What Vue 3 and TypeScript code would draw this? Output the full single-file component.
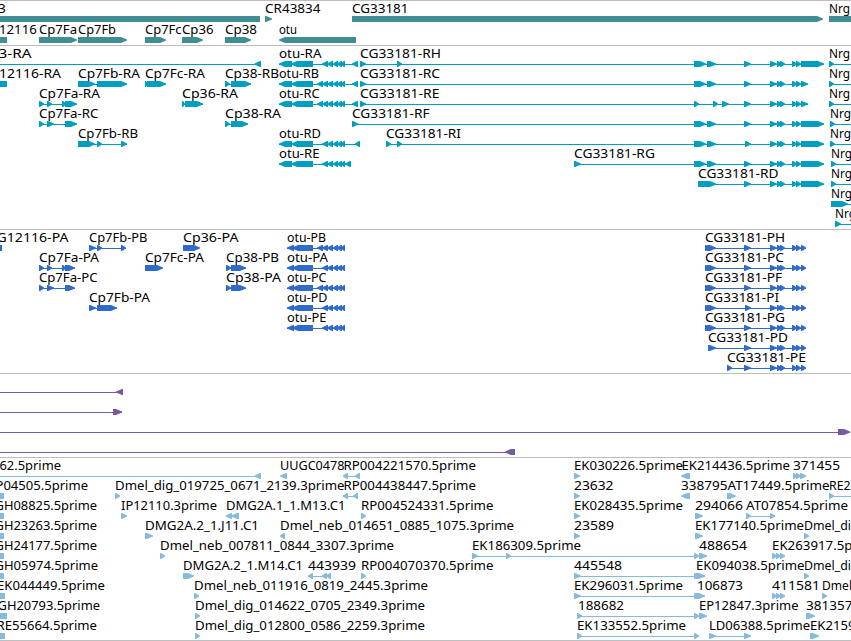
<template>
  <main class="browser">
    <section v-for="track in tracks" :key="track.name" :class="['track', track.name]">
      <svg v-for="(row, i) in track.rows" :key="i" class="row" width="851" height="20">
        <g v-for="(item, j) in row" :key="j">
          <text
            v-if="item.label"
            class="label"
            :x="item.from - 0.5"
            y="11"
            :textLength="item.to ? item.to - item.from + 1 : undefined"
            lengthAdjust="spacingAndGlyphs"
          >{{ item.label }}</text>
          <rect
            v-if="item.exons.length > 1"
            class="shape"
            :x="item.exons[0][0]"
            y="17"
            :width="item.exons[item.exons.length - 1][1] - item.exons[0][0]"
            height="1"
          />
          <polygon
            v-for="(exon, k) in item.exons"
            :key="k"
            class="shape"
            :points="arrow(exon, item.reverse)"
          />
        </g>
      </svg>
    </section>
  </main>
</template>

<script setup lang="ts">
type Exon = [number, number];

interface Feature {
  label: string;
  from: number;
  to: number;
  exons: Exon[];
  reverse: boolean;
}

interface Track {
  name: string;
  rows: Feature[][];
}

const fwd = (label: string, from: number, to: number, exons: Exon[]): Feature => ({
  label, from, to, exons, reverse: false,
});

const rev = (label: string, from: number, to: number, exons: Exon[]): Feature => ({
  label, from, to, exons, reverse: true,
});

// Head of the arrow is at most 7px and ends in a blunt 1px tip
const arrow = ([start, end]: Exon, reverse: boolean) => {
  const head = Math.min(end - start - 1, 6);
  if (reverse) {
    return `${end},14 ${start + head},14 ${start},16.4 ${start},17.6 ${start + head},20 ${end},20`;
  }
  return `${start},14 ${end - head},14 ${end},16.4 ${end},17.6 ${end - head},20 ${start},20`;
};

// Features that run past the visible window
const LEFT: Exon = [-20, -10];
const RIGHT: Exon = [880, 890];

const otuMid: Exon[] = [[322, 328], [327, 333], [333, 338], [337, 342], [341, 345]];
const otuMidLong: Exon[] = [[317, 323], ...otuMid];
const otuTx: Exon[] = [[279, 292], [291, 313]];
const otuCds: Exon[] = [[287, 294], [292, 313]];

const cgHead: Exon[] = [[694, 706], [707, 716]];
const cgMid: Exon[] = [[744, 751], [770, 777], [777, 782], [780, 785], [792, 797], [796, 801]];
const cgMidI: Exon[] = [[745, 751], ...cgMid.slice(1)];
const cgLong: Exon = [801, 824];
const cgShort: Exon = [801, 808];
const cgCds: Exon[] = [[705, 712], [707, 716]];
const cgEnd: Exon = [801, 806];

const tracks: Track[] = [
  {
    name: 'genes',
    rows: [
      [
        rev('3', -1.5, 5.3, [[-20, 260]]),
        fwd('CR43834', 265.5, 320, [[265, 272]]),
        fwd('CG33181', 352.5, 408, [[352, 823]]),
        fwd('Nrg', 829.5, 849.5, [[829, 890]]),
      ],
      [
        rev('12116', -0.5, 36.3, [[-20, 7]]),
        fwd('Cp7Fa', 39.5, 76.5, [[39, 77]]),
        fwd('Cp7Fb', 78.5, 115.5, [[78, 127]]),
        fwd('Cp7Fc', 145.5, 181, [[145, 166]]),
        fwd('Cp36', 182.5, 213, [[182, 203]]),
        fwd('Cp38', 225.5, 256.5, [[225, 251]]),
        rev('otu', 279.5, 296.5, [[279, 356]]),
      ],
    ],
  },
  {
    name: 'transcripts',
    rows: [
      [
        rev('3-RA', -1, 31, [LEFT, [254.5, 261]]),
        rev('otu-RA', 279.5, 321, [...otuTx, ...otuMid, [352, 358]]),
        fwd('CG33181-RH', 360.5, 440.5, [[360, 366], [397, 402], ...cgHead, ...cgMid, cgLong]),
        fwd('Nrg', 829.5, 849.5, [[829, 834], RIGHT]),
      ],
      [
        rev('12116-RA', -0.5, 60.5, [[-20, 7]]),
        fwd('Cp7Fb-RA', 78.5, 139.5, [[78, 95], [97, 127]]),
        fwd('Cp7Fc-RA', 145.5, 204.5, [[145, 148], [147, 166]]),
        fwd('Cp38-RB', 225.5, 278.5, [[225, 230], [231, 251]]),
        rev('otu-RB', 279.5, 318.5, [...otuTx, ...otuMidLong, [352, 358]]),
        fwd('CG33181-RC', 360.5, 439.5, [[360, 366], ...cgHead, ...cgMid, cgShort]),
        fwd('Nrg', 829.5, 849.5, [[829, 834], RIGHT]),
      ],
      [
        fwd('Cp7Fa-RA', 39.5, 99.5, [[39, 44], [47, 52], [62, 66], [65, 77]]),
        fwd('Cp36-RA', 182.5, 237.5, [[182, 185], [185, 203]]),
        rev('otu-RC', 279.5, 319, [...otuTx, ...otuMidLong, [352, 358]]),
        fwd('CG33181-RE', 360.5, 439, [[360, 366], [694, 699], [713, 718], [722, 729], ...cgMid, cgShort]),
        fwd('Nrg', 829.5, 849.5, [[829, 834], RIGHT]),
      ],
      [
        fwd('Cp7Fa-RC', 39.5, 98, [[39, 44], [47, 54], [65, 77]]),
        fwd('Cp38-RA', 225.5, 280.5, [[225, 230], [231, 248]]),
        fwd('CG33181-RF', 352.5, 429, [[352, 358], ...cgHead, ...cgMid, cgLong]),
        fwd('Nrg', 830.5, 850.5, [[830, 835], RIGHT]),
      ],
      [
        fwd('Cp7Fb-RB', 78.5, 137.5, [[78, 95], [97, 102], [121, 127]]),
        rev('otu-RD', 279.5, 320.5, [...otuTx, ...otuMid, [355, 360]]),
        fwd('CG33181-RI', 386.5, 460.5, [[386, 391], [397, 402], ...cgHead, ...cgMidI, cgLong]),
        fwd('Nrg', 830.5, 850.5, [[830, 835], RIGHT]),
      ],
      [
        rev('otu-RE', 279.5, 319, [...otuTx, ...otuMid, [345, 351]]),
        fwd('CG33181-RG', 574.5, 654.5, [[574, 581], ...cgHead, ...cgMid, cgLong]),
        fwd('Nrg', 831.5, 851.5, [[831, 836], RIGHT]),
      ],
      [
        fwd('CG33181-RD', 698.5, 778, [[698, 716], ...cgMid, cgLong]),
        fwd('Nrg', 831.5, 851.5, [[831, 836], RIGHT]),
      ],
      [fwd('Nrg', 831.5, 851.5, [[831, 848], RIGHT])],
      [fwd('Nrg', 835.5, 855.5, [[835, 841], RIGHT])],
    ],
  },
  {
    name: 'proteins',
    rows: [
      [
        rev('G12116-PA', -3, 68, [[-20, 2]]),
        fwd('Cp7Fb-PB', 89.5, 147, [[89, 96], [97, 102], [121, 126]]),
        fwd('Cp36-PA', 183.5, 238, [[183, 200]]),
        rev('otu-PB', 287.5, 325.5, [...otuCds, ...otuMidLong]),
        fwd('CG33181-PH', 705.5, 784.5, [...cgCds, ...cgMid, cgEnd]),
      ],
      [
        fwd('Cp7Fa-PA', 39.5, 98.5, [[39, 44], [47, 52], [62, 66], [65, 75]]),
        fwd('Cp7Fc-PA', 145.5, 203.5, [[145, 163]]),
        fwd('Cp38-PB', 226.5, 278.5, [[226, 231], [231, 246]]),
        rev('otu-PA', 287.5, 327.5, [...otuCds, ...otuMid]),
        fwd('CG33181-PC', 705.5, 783.5, [...cgCds, ...cgMid, cgEnd]),
      ],
      [
        fwd('Cp7Fa-PC', 39.5, 97, [[39, 44], [47, 54], [65, 75]]),
        fwd('Cp38-PA', 226.5, 280.5, [[226, 231], [231, 246]]),
        rev('otu-PC', 287.5, 326, [...otuCds, ...otuMidLong]),
        fwd('CG33181-PF', 705.5, 781.5, [...cgCds, ...cgMid, cgEnd]),
      ],
      [
        fwd('Cp7Fb-PA', 89.5, 149.5, [[89, 96], [97, 117]]),
        rev('otu-PD', 287.5, 327, [...otuCds, ...otuMid]),
        fwd('CG33181-PI', 705.5, 778.5, [...cgCds, ...cgMidI, cgEnd]),
      ],
      [
        rev('otu-PE', 287.5, 326, [...otuCds, ...otuMid]),
        fwd('CG33181-PG', 705.5, 784.5, [...cgCds, ...cgMid, cgEnd]),
      ],
      [fwd('CG33181-PD', 708.5, 787.5, [[708, 716], ...cgMid, cgEnd])],
      [fwd('CG33181-PE', 727.5, 805.5, [[727, 732], ...cgMid, cgEnd])],
    ],
  },
  {
    name: 'insertions',
    rows: [
      [rev('', 0, 0, [LEFT, [116, 123]])],
      [fwd('', 0, 0, [LEFT, [113, 122]])],
      [fwd('', 0, 0, [LEFT, [838, 850]])],
      [rev('', 0, 0, [LEFT, [505, 515]])],
    ],
  },
  {
    name: 'ests',
    rows: [
      [
        rev('62.5prime', 0, 60.5, [LEFT, [254.5, 261]]),
        rev('UUGC0478', 280.5, 344, [[280, 287]]),
        rev('RP004221570.5prime', 344, 475.5, [[343, 348], [355, 360]]),
        fwd('EK030226.5prime', 574.5, 682.5, [[574, 580]]),
        rev('EK214436.5prime', 682, 789.5, [[681, 690]]),
        fwd('371455', 793.5, 839.5, [[793, 797], [796, 801], [800, 806]]),
      ],
      [
        rev('P04505.5prime', -4, 87.5, [[-20, 4]]),
        fwd('Dmel_dig_019725_0671_2139.3prime', 115.5, 344, [[115, 120]]),
        rev('RP004438447.5prime', 344, 475.5, [[343, 348], [353, 358]]),
        fwd('23632', 574.5, 613, [[574, 580]]),
        rev('338795', 681.5, 727, [[681, 690]]),
        fwd('AT17449.5prime', 728, 829, [[727, 736]]),
        fwd('RE2', 829.5, 850, [[829, 834], RIGHT]),
      ],
      [
        rev('GH08825.5prime', -5, 96.5, [[-20, 4]]),
        fwd('IP12110.3prime', 121.5, 216.5, [[121, 127]]),
        rev('DMG2A.1_1.M13.C1', 226.5, 345, [[226, 232], [231, 239]]),
        fwd('RP004524331.5prime', 361.5, 493, [[361, 366]]),
        fwd('EK028435.5prime', 574.5, 682.5, [[574, 580]]),
        fwd('294066', 695.5, 742.5, [[695, 703]]),
        fwd('AT07854.5prime', 746.5, 847.5, [[746, 751], [770, 775]]),
      ],
      [
        rev('GH23263.5prime', -5, 96.5, [[-20, 4]]),
        fwd('DMG2A.2_1.J11.C1', 145.5, 258.5, [[145, 153]]),
        rev('Dmel_neb_014651_0885_1075.3prime', 280.5, 513.5, [[280, 285]]),
        fwd('23589', 574.5, 613.5, [[574, 580]]),
        fwd('EK177140.5prime', 695.5, 803.5, [[695, 703]]),
        fwd('Dmel_di', 804.5, 850.5, [[804, 809]]),
      ],
      [
        rev('GH24177.5prime', -5, 96.5, [[-20, 4]]),
        fwd('Dmel_neb_007811_0844_3307.3prime', 160.5, 393.5, [[160, 165]]),
        fwd('EK186309.5prime', 472.5, 580.5, [[472, 478], [506, 511], [694, 699], [699, 707]]),
        fwd('488654', 699.5, 746.5, []),
        fwd('EK263917.5p', 772.5, 852, [[772, 777], [776, 781], [780, 785]]),
      ],
      [
        rev('GH05974.5prime', -5, 97.5, [[-20, 4]]),
        fwd('DMG2A.2_1.M14.C1', 183.5, 302.5, [[183, 194]]),
        rev('443939', 308.5, 355.5, [[308, 313], [322, 327], [326, 331]]),
        fwd('RP004070370.5prime', 361.5, 493, [[361, 366]]),
        fwd('445548', 574.5, 621.5, [[574, 581], [694, 699], [696, 705]]),
        fwd('EK094038.5prime', 696.5, 804, []),
        fwd('Dmel_di', 804.5, 850.5, [[804, 809]]),
      ],
      [
        rev('EK044449.5prime', -2.5, 104.5, [[-20, 5]]),
        fwd('Dmel_neb_011916_0819_2445.3prime', 194.5, 427.5, [[194, 199]]),
        fwd('EK296031.5prime', 574.5, 682.5, [[574, 581], [694, 699], [696, 705]]),
        fwd('106873', 697.5, 742.5, []),
        fwd('411581', 772.5, 819.5, [[772, 777], [776, 781], [780, 785]]),
        fwd('Dmel', 822.5, 851.5, [[822, 827]]),
      ],
      [
        rev('GH20793.5prime', -2, 99.5, [[-20, 7]]),
        fwd('Dmel_dig_014622_0705_2349.3prime', 195.5, 424.5, [[195, 200]]),
        fwd('188682', 578.5, 623.5, [[577, 582], [694, 699], [699, 707]]),
        fwd('EP12847.3prime', 699.5, 798, []),
        fwd('381357', 806.5, 852, [[806, 815]]),
      ],
      [
        rev('RE55664.5prime', -3, 96.5, [[-20, 5]]),
        fwd('Dmel_dig_012800_0586_2259.3prime', 195.5, 424.5, [[195, 200]]),
        fwd('EK133552.5prime', 577.5, 685.5, [[577, 582], [694, 699]]),
        fwd('LD06388.5prime', 709.5, 809.5, [[709, 716], [744, 751]]),
        fwd('EK2159', 810.5, 855, [[810, 819]]),
      ],
    ],
  },
];
</script>

<style>
body {
  margin: 0;
  background: #fff;
}
</style>

<style scoped>
.browser {
  display: flex;
  flex-direction: column;
  width: 851px;
  height: 641px;
  box-sizing: border-box;
  border-bottom: 1px solid #bebebe;
  overflow: hidden;
}

.track {
  display: flex;
  flex-direction: column;
  flex: none;
  box-sizing: border-box;
  padding-top: 1px;
  border-top: 1px solid #bebebe;
}

.row {
  display: block;
  flex: none;
  overflow: visible;
}

.label {
  font-family: 'Noto Sans', 'DejaVu Sans', sans-serif;
  font-size: 12.3px;
  fill: #000;
}

.genes {
  height: 45px;
  gap: 1px;
}

.genes .shape {
  fill: #408e94;
}

.transcripts {
  height: 184px;
}

.transcripts .shape {
  fill: #009fbf;
}

.proteins {
  height: 144px;
}

.proteins .shape {
  fill: #2f6bcd;
}

.insertions {
  height: 84px;
}

.insertions .shape {
  fill: #7559a6;
}

.ests {
  height: 183px;
}

.ests .shape {
  fill: #87bbdd;
}
</style>
